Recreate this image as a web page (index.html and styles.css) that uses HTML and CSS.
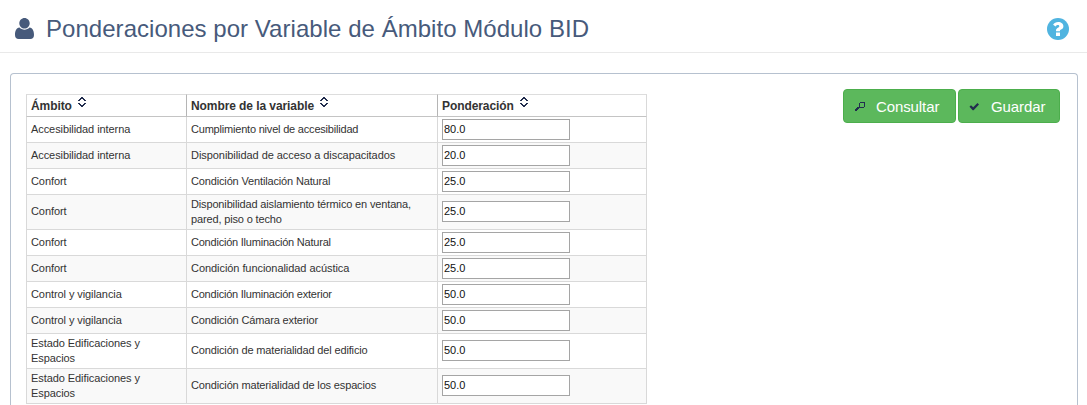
FILE: index.html
```
<!DOCTYPE html>
<html lang="es">
<head>
<meta charset="utf-8">
<title>Ponderaciones por Variable de Ámbito Módulo BID</title>
<link rel="stylesheet" href="styles.css">
</head>
<body>
<svg class="defs" width="0" height="0" aria-hidden="true">
  <symbol id="sort" viewBox="0 0 8 11" shape-rendering="crispEdges"><path d="M3 0h2v1H3zM2 1h2v1H2zM4 1h2v1H4zM1 2h2v1H1zM5 2h2v1H5zM0 3h2v1H0zM6 3h2v1H6zM0 6h2v1H0zM6 6h2v1H6zM1 7h2v1H1zM5 7h2v1H5zM2 8h4v1H2zM3 9h2v1H3z"/></symbol>
</svg>
<header class="page-header">
  <svg class="user-icon" viewBox="0 0 19 21"><path d="M9.500 0C12.300 0 14.700 2.400 14.700 5.300S12.300 10.600 9.500 10.600 4.300 8.200 4.300 5.300 6.700 0 9.500 0zM4.500 9.500C5.800 10.900 7.600 11.700 9.500 11.700s3.700-.8 5-2.200C17.800 9.700 19 13.200 19 17c0 2.500-1.400 4-3.700 4H3.700C1.400 21 0 19.500 0 17c0-3.800 1.200-7.300 4.500-7.500z"/></svg>
  <h1 class="title">Ponderaciones por Variable de Ámbito Módulo BID</h1>
  <svg class="help-icon" viewBox="0 0 22 22"><circle cx="11" cy="11" r="11"/><path class="help-mark" d="M9 14.500h4V18H9zM9 13.300v-.8c0-1.400.8-2.100 1.900-2.800.9-.5 1.400-.9 1.400-1.500s-.6-1.100-1.400-1.100c-1 0-1.500.5-2.300 1.400L6.100 6.700C7.200 4.900 8.900 4 11.200 4c3 0 5.200 1.700 5.200 4.200 0 1.900-1 2.700-2.300 3.400-.8.5-1.100.7-1.100 1.200v.5z"/></svg>
</header>
<main class="panel">
  <table class="grid">
    <colgroup><col class="c1"><col class="c2"><col class="c3"></colgroup>
    <thead><tr>
      <th>Ámbito<svg class="sort"><use href="#sort"/></svg></th>
      <th>Nombre de la variable<svg class="sort"><use href="#sort"/></svg></th>
      <th>Ponderación<svg class="sort"><use href="#sort"/></svg></th>
    </tr></thead>
    <tbody>
      <tr><td>Accesibilidad interna</td><td class="fitted">Cumplimiento nivel de accesibilidad</td><td><input class="value" value="80.0"></td></tr>
      <tr><td>Accesibilidad interna</td><td class="wide">Disponibilidad de acceso a discapacitados</td><td><input class="value" value="20.0"></td></tr>
      <tr><td>Confort</td><td>Condición Ventilación Natural</td><td><input class="value" value="25.0"></td></tr>
      <tr class="tall"><td>Confort</td><td class="two">Disponibilidad aislamiento térmico en ventana,<br>pared, piso o techo</td><td class="field"><input class="value" value="25.0"></td></tr>
      <tr><td>Confort</td><td class="narrow">Condición Iluminación Natural</td><td><input class="value" value="25.0"></td></tr>
      <tr><td>Confort</td><td class="wide">Condición funcionalidad acústica</td><td><input class="value" value="25.0"></td></tr>
      <tr><td>Control y vigilancia</td><td class="narrow">Condición Iluminación exterior</td><td><input class="value" value="50.0"></td></tr>
      <tr><td>Control y vigilancia</td><td>Condición Cámara exterior</td><td><input class="value" value="50.0"></td></tr>
      <tr class="tall"><td class="two">Estado Edificaciones y<br>Espacios</td><td>Condición de materialidad del edificio</td><td class="field"><input class="value" value="50.0"></td></tr>
      <tr class="tall"><td class="two">Estado Edificaciones y<br>Espacios</td><td>Condición materialidad de los espacios</td><td class="field"><input class="value" value="50.0"></td></tr>
    </tbody>
  </table>
  <div class="actions">
    <button class="btn search"><svg class="btn-icon" viewBox="0 0 11 11" shape-rendering="crispEdges"><path d="M5 1h4v1H5zM4 2h1v4H4zM9 1h1v5H9zM4 6h5v1H4zM2 6h3v1H2zM1 7h3v1H1zM0 8h3v1H0zM0 9h2v1H0z"/></svg><span>Consultar</span></button>
    <button class="btn save"><svg class="btn-icon" viewBox="0 0 11 11"><path d="M.5 5.800L2 4.300l2.200 2L8.500 2l1.500 1.400L4.600 9.200H3.700z"/></svg><span>Guardar</span></button>
  </div>
</main>
</body>
</html>
```
FILE: styles.css
```
* { box-sizing: border-box; }
body {
  margin: 0;
  height: 405px;
  overflow: hidden;
  background: #fff;
  color: #333;
  font-family: "Liberation Sans", Arial, sans-serif;
  display: flex;
  flex-direction: column;
}
.defs { display: block; flex: none; }
.page-header {
  flex: none;
  height: 53px;
  border-bottom: 1px solid #e9e9e9;
  display: flex;
  align-items: flex-start;
  padding: 18px 18px 0 15px;
}
.user-icon { width: 19px; height: 21px; fill: #475a7b; }
.title {
  margin: -4px auto 0 12px;
  font-size: 24px;
  line-height: 30px;
  font-weight: 400;
  letter-spacing: .04px;
  color: #475a7b;
  white-space: nowrap;
}
.help-icon { width: 22px; height: 22px; fill: #50b4e0; }
.help-mark { fill: #fff; }
.panel {
  flex: 1;
  min-height: 0;
  margin: 20px 9px 0 10px;
  border: 1px solid #b6c1cf;
  border-bottom: 0;
  border-radius: 4px 4px 0 0;
  padding: 15px 17px 0 15px;
  display: flex;
  justify-content: space-between;
  align-items: flex-start;
}
.grid {
  width: 621px;
  margin-top: 5px;
  table-layout: fixed;
  border-collapse: separate;
  border-spacing: 0;
}
.c1 { width: 161px; }
.c2 { width: 251px; }
.c3 { width: 209px; }
th, td {
  border-right: 1px solid #d9d9d9;
  border-bottom: 1px solid #d9d9d9;
  padding: 0 4px;
  text-align: left;
  white-space: nowrap;
}
th:first-child, td:first-child { border-left: 1px solid #d9d9d9; }
th {
  height: 23px;
  padding-bottom: 2px;
  border-top: 1px solid #ddd;
  border-right-color: #b5b5b5;
  border-bottom-color: #c4c4c4;
  font-size: 12px;
  line-height: 14px;
  letter-spacing: -.08px;
}
th:last-child { border-right-color: #d9d9d9; }
td {
  height: 26px;
  font-size: 11px;
  line-height: 15px;
  letter-spacing: -.08px;
}
td:nth-child(2) { letter-spacing: -.15px; }
td.wide:nth-child(2) { letter-spacing: -.06px; }
td.fitted:nth-child(2) { letter-spacing: -.2px; }
td.narrow:nth-child(2) { letter-spacing: -.22px; }
.tall td { height: 35px; padding-bottom: 2px; }
.tall .two { padding-bottom: 0; }
.tall .field { padding-bottom: 1px; }
tbody tr:nth-child(even) { background: #f9f9f9; }
.sort {
  width: 8px;
  height: 11px;
  margin-left: 6px;
  fill: #222d4e;
  vertical-align: 2px;
}
.value {
  display: block;
  width: 128px;
  height: 21px;
  border: 1px solid #a5a5a5;
  border-radius: 0;
  padding: 0 1px 1px;
  background: #fff;
  color: #111;
  font: 11px "Liberation Sans", Arial, sans-serif;
}
.actions { display: flex; gap: 2px; }
.btn {
  height: 34px;
  border: 1px solid #4cae4c;
  border-radius: 4px;
  background: #5cb85c;
  color: #fff;
  padding: 0 0 0 11px;
  display: flex;
  align-items: center;
  gap: 10px;
  font: 15px "Liberation Sans", Arial, sans-serif;
  letter-spacing: -.1px;
}
.search { width: 113px; }
.save { width: 102px; }
.btn-icon { width: 11px; height: 11px; fill: #222d4e; }
.save .btn-icon { margin-left: -1px; margin-right: 1px; }
```
